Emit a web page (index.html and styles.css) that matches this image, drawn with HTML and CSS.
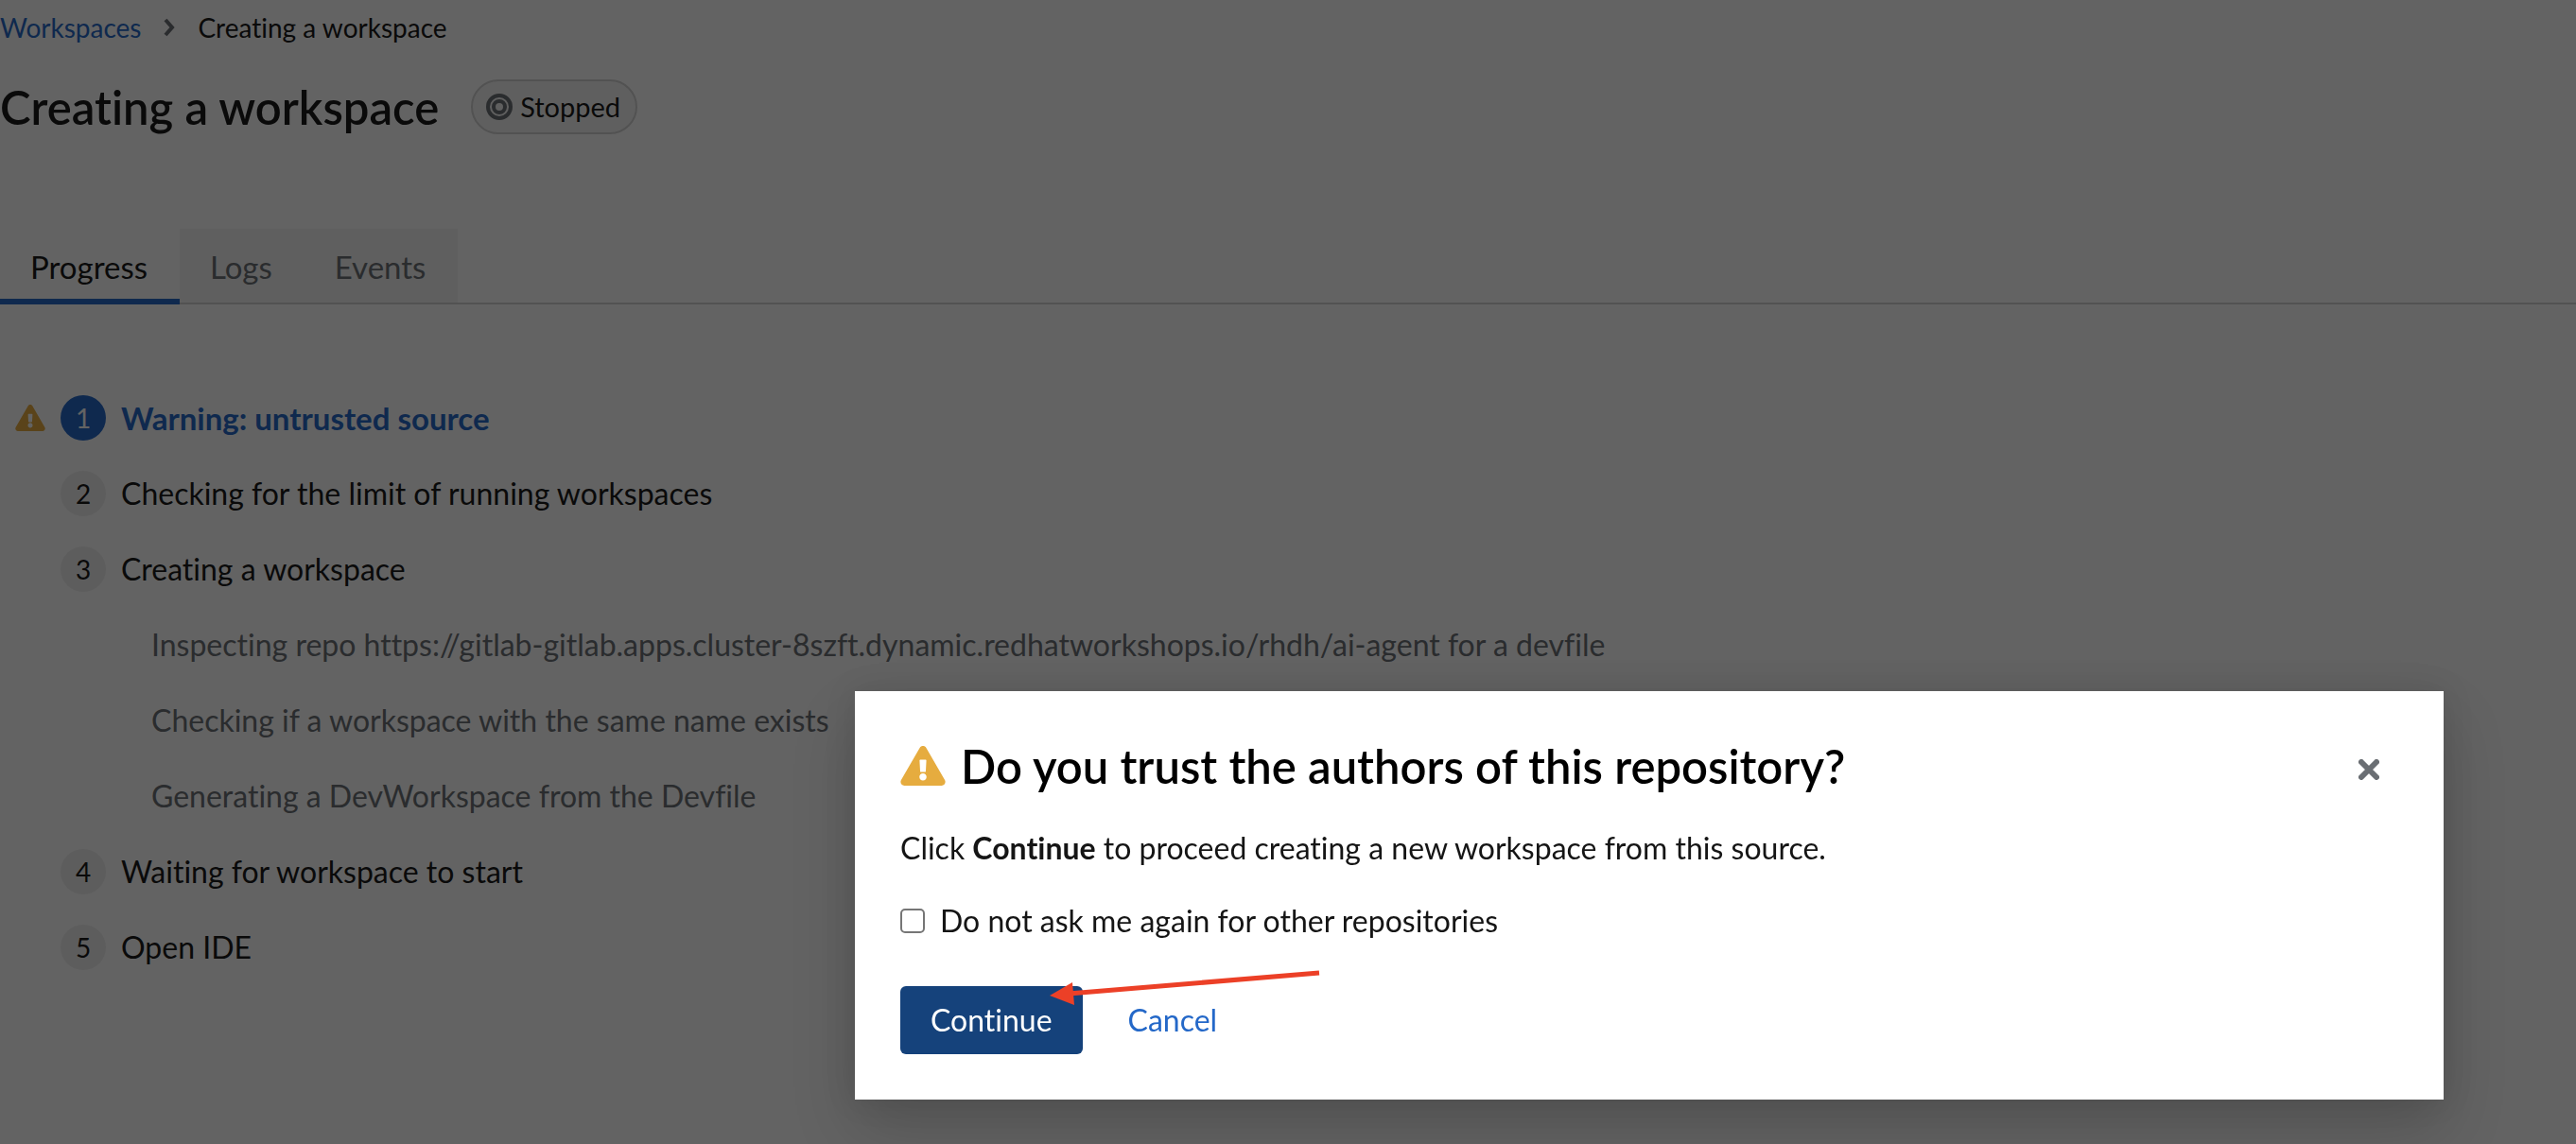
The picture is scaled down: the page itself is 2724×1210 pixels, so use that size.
FILE: index.html
```html
<!DOCTYPE html>
<html lang="en">
<head>
<meta charset="utf-8">
<title>Creating a workspace</title>
<link rel="stylesheet" href="styles.css">
</head>
<body>
<main class="page">
  <nav class="breadcrumb" aria-label="Breadcrumb">
    <a class="link" href="#workspaces">Workspaces</a>
    <svg class="breadcrumb-divider" viewBox="0 0 12 20" aria-hidden="true"><path d="M2 2l7 8-7 8"/></svg>
    <span class="breadcrumb-current">Creating a workspace</span>
  </nav>

  <header class="heading">
    <h1 class="title">Creating a workspace</h1>
    <span class="status">
      <svg class="status-icon" viewBox="0 0 28 28" aria-hidden="true"><circle cx="14" cy="14" r="12"/><circle cx="14" cy="14" r="6"/></svg>
      Stopped
    </span>
  </header>

  <div class="tabs" role="tablist">
    <button class="tab tab-current" type="button" role="tab" aria-selected="true">Progress</button>
    <button class="tab" type="button" role="tab" aria-selected="false">Logs</button>
    <button class="tab" type="button" role="tab" aria-selected="false">Events</button>
  </div>

  <ol class="steps">
    <li class="step step-current">
      <svg class="step-warning" viewBox="0 0 576 512" aria-hidden="true"><path d="M569.5 440C588 472 564.800 512 527.900 512H48.100c-36.900 0-60-40.100-41.600-72L246.400 24c18.500-32 64.700-32 83.200 0l239.900 416zM288 354c-25.400 0-46 20.600-46 46s20.600 46 46 46 46-20.600 46-46-20.600-46-46-46zm-43.700-165.300l7.400 136c.3 6.400 5.600 11.300 12 11.300h48.500c6.400 0 11.600-5 12-11.300l7.400-136c.4-6.900-5.100-12.700-12-12.700h-63.400c-6.900 0-12.400 5.800-12 12.700z"/></svg>
      <span class="step-number">1</span>Warning: untrusted source
    </li>
    <li class="step"><span class="step-number">2</span>Checking for the limit of running workspaces</li>
    <li class="step"><span class="step-number">3</span>Creating a workspace</li>
    <li>
      <ul class="substeps">
        <li class="substep">Inspecting repo https://gitlab-gitlab.apps.cluster-8szft.dynamic.redhatworkshops.io/rhdh/ai-agent for a devfile</li>
        <li class="substep">Checking if a workspace with the same name exists</li>
        <li class="substep">Generating a DevWorkspace from the Devfile</li>
      </ul>
    </li>
    <li class="step"><span class="step-number">4</span>Waiting for workspace to start</li>
    <li class="step"><span class="step-number">5</span>Open IDE</li>
  </ol>
</main>

<div class="backdrop">
  <section class="modal" role="dialog" aria-modal="true" aria-labelledby="modal-title">
    <header class="modal-header">
      <svg class="modal-warning" viewBox="0 0 576 512" aria-hidden="true"><path d="M569.5 440C588 472 564.800 512 527.900 512H48.100c-36.900 0-60-40.100-41.600-72L246.400 24c18.500-32 64.700-32 83.200 0l239.900 416zM288 354c-25.400 0-46 20.600-46 46s20.600 46 46 46 46-20.600 46-46-20.600-46-46-46zm-43.700-165.300l7.400 136c.3 6.400 5.600 11.300 12 11.300h48.500c6.400 0 11.600-5 12-11.300l7.400-136c.4-6.900-5.100-12.700-12-12.700h-63.400c-6.900 0-12.400 5.800-12 12.700z"/></svg>
      <h2 class="modal-title" id="modal-title">Do you trust the authors of this repository?</h2>
      <button class="close" type="button" aria-label="Close">
        <svg class="close-icon" viewBox="0 0 22 22" aria-hidden="true"><path d="M3 3l16 16M19 3L3 19"/></svg>
      </button>
    </header>
    <p class="modal-text">Click <b>Continue</b> to proceed creating a new workspace from this source.</p>
    <label class="check"><input class="check-box" type="checkbox">Do not ask me again for other repositories</label>
    <footer class="modal-footer">
      <button class="button button-primary" type="button">Continue</button>
      <button class="button button-link" type="button">Cancel</button>
      <svg class="arrow" viewBox="0 0 286 40" aria-hidden="true"><path class="arrow-line" d="M20 26L285 4"/><path class="arrow-head" d="M0 28L24 14L26 38Z"/></svg>
    </footer>
  </section>
</div>
</body>
</html>
```
FILE: styles.css
```css
* {
  box-sizing: border-box;
}

body {
  margin: 0;
  background: #fff;
  color: #151515;
  font-family: Lato, sans-serif;
  font-size: 32px;
  font-variant-ligatures: none;
  line-height: 48px;
}

button {
  border: 0;
  background: none;
  font: inherit;
  font-variant-ligatures: none;
  cursor: pointer;
}

.link {
  color: #2468c8;
  text-decoration: none;
}

.breadcrumb {
  display: flex;
  align-items: center;
  gap: 24px;
  padding-top: 8px;
  font-size: 28px;
  line-height: 42px;
}

.breadcrumb-divider {
  width: 12px;
  height: 20px;
  fill: none;
  stroke: #6a6e73;
  stroke-width: 4px;
}

.heading {
  display: flex;
  align-items: center;
  gap: 34px;
  margin-top: 32px;
}

.title {
  margin: 0;
  font-size: 49px;
  font-weight: 600;
  line-height: 62px;
}

.status {
  display: flex;
  align-items: center;
  gap: 8px;
  padding: 0 16px 0 14px;
  border: 2px solid #d2d2d2;
  border-radius: 30px;
  background: #f5f5f5;
  font-size: 29px;
  line-height: 54px;
}

.status-icon {
  width: 28px;
  height: 28px;
  fill: none;
  stroke: #6a6e73;
  stroke-width: 4px;
}

.tabs {
  display: flex;
  margin-top: 98px;
  box-shadow: inset 0 -2px #d2d2d2;
}

.tab {
  padding: 16px 34px 16px 32px;
  background: #f5f5f5;
  box-shadow: inset 0 -2px #d2d2d2;
  color: #6a6e73;
  font-size: 33px;
}

.tab-current {
  background: #fff;
  box-shadow: inset 0 -6px #2468c8;
  color: #151515;
}

.steps {
  display: flex;
  flex-direction: column;
  gap: 32px;
  margin: 96px 0 0;
  padding: 0 0 0 64px;
  list-style: none;
}

.step {
  position: relative;
  display: flex;
  align-items: center;
  gap: 16px;
}

.step-current {
  color: #2468c8;
  font-size: 33px;
  font-weight: 700;
}

.step-number {
  width: 48px;
  border-radius: 50%;
  background: #f0f0f0;
  color: #151515;
  font-size: 28px;
  font-weight: 400;
  text-align: center;
}

.step-current .step-number {
  background: #2468c8;
  color: #fff;
}

.step-warning {
  position: absolute;
  left: -48px;
  width: 32px;
  height: 28px;
  fill: #e6ac3f;
}

.substeps {
  display: flex;
  flex-direction: column;
  gap: 32px;
  margin: 0;
  padding: 0 0 0 96px;
  color: #6a6e73;
  list-style: none;
}

.backdrop {
  position: fixed;
  inset: 0;
  display: flex;
  align-items: flex-end;
  justify-content: flex-end;
  padding: 0 140px 47px 0;
  background: rgba(3, 3, 3, 0.62);
}

.modal {
  width: 1680px;
  max-width: 100%;
  padding: 48px;
  background: #fff;
  box-shadow: 0 32px 64px rgba(3, 3, 3, 0.16), 0 0 32px rgba(3, 3, 3, 0.1);
}

.modal-header {
  display: flex;
  align-items: center;
  gap: 16px;
}

.modal-warning {
  width: 48px;
  height: 42px;
  fill: #e6ac3f;
}

.modal-title {
  flex: 1;
  margin: 0;
  color: #000;
  font-size: 49px;
  font-weight: 600;
  line-height: 62px;
}

.close {
  display: flex;
  padding: 8px 20px 0;
}

.close-icon {
  width: 22px;
  height: 22px;
  fill: none;
  stroke: #6a6e73;
  stroke-width: 6px;
  stroke-linecap: round;
}

.modal-text {
  margin: 32px 0 29px;
}

.check {
  display: flex;
  align-items: center;
  gap: 16px;
}

.check-box {
  width: 26px;
  height: 26px;
  margin: 0;
  border: 2px solid #767676;
  border-radius: 5px;
  background: #fff;
  appearance: none;
}

.modal-footer {
  position: relative;
  display: flex;
  gap: 16px;
  margin-top: 45px;
}

.button {
  padding: 12px 32px;
  border-radius: 6px;
}

.button-primary {
  background: #15427b;
  color: #fff;
}

.button-link {
  color: #2468c8;
}

.arrow {
  position: absolute;
  left: 158px;
  top: -18px;
  width: 286px;
  height: 40px;
}

.arrow-line {
  fill: none;
  stroke: #ec4027;
  stroke-width: 5px;
}

.arrow-head {
  fill: #ec4027;
}
```
